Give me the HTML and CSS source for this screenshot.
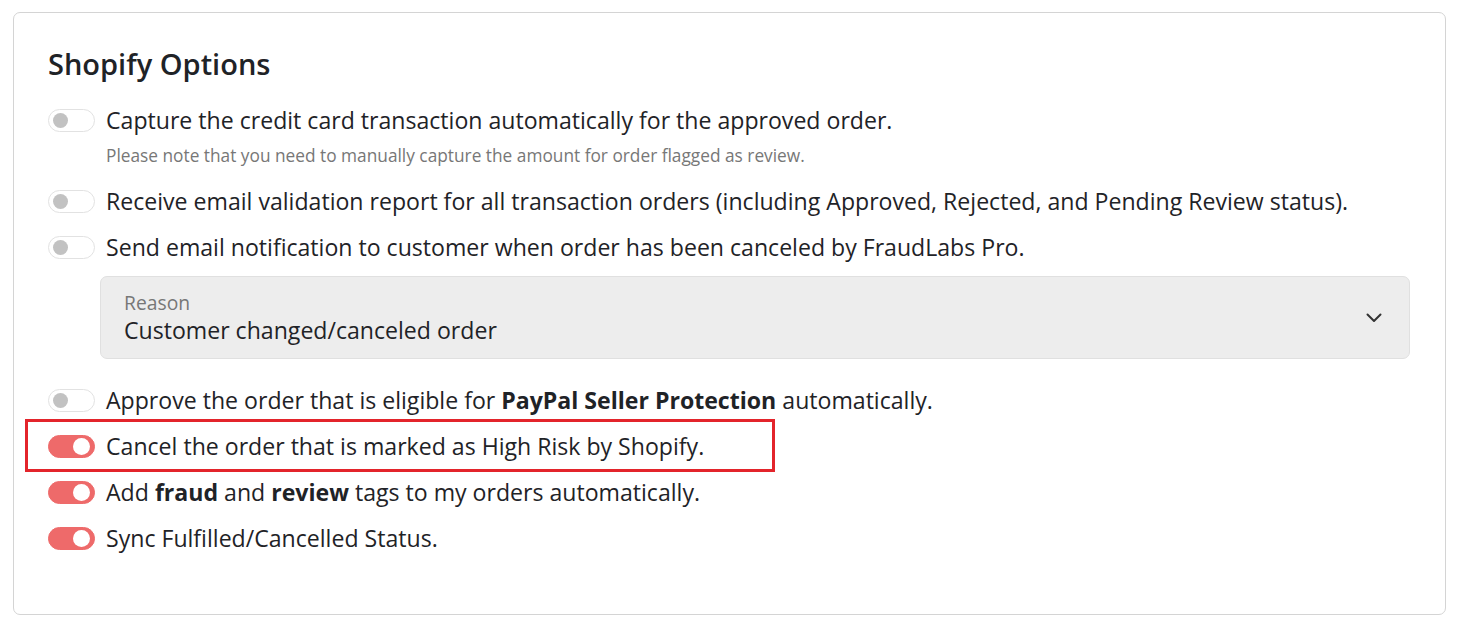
FILE: index.html
```html
<!DOCTYPE html>
<html lang="en">
<head>
<meta charset="utf-8">
<title>Shopify Options</title>
<link rel="stylesheet" href="styles.css">
</head>
<body>
<div class="card">
  <h2 class="title">Shopify Options</h2>
  <div class="options">
    <div class="option">
      <div class="row">
        <span class="toggle"></span>
        <span class="label">Capture the credit card transaction automatically for the approved order.</span>
      </div>
      <div class="note">Please note that you need to manually capture the amount for order flagged as review.</div>
    </div>
    <div class="row">
      <span class="toggle"></span>
      <span class="label">Receive email validation report for all transaction orders (including Approved, Rejected, and Pending Review status).</span>
    </div>
    <div class="option">
      <div class="row">
        <span class="toggle"></span>
        <span class="label">Send email notification to customer when order has been canceled by FraudLabs Pro.</span>
      </div>
      <div class="select">
        <div class="select-text">
          <div class="select-label">Reason</div>
          <div class="select-value">Customer changed/canceled order</div>
        </div>
        <svg class="chevron" width="16" height="10" viewBox="0 0 16 10"><path d="M1.5 1.5 L8 8 L14.5 1.5" fill="none" stroke="#333" stroke-width="2" stroke-linecap="round" stroke-linejoin="round"/></svg>
      </div>
    </div>
    <div class="row">
      <span class="toggle"></span>
      <span class="label">Approve the order that is eligible for <b>PayPal Seller Protection</b> automatically.</span>
    </div>
    <div class="row highlighted">
      <span class="toggle on"></span>
      <span class="label">Cancel the order that is marked as High Risk by Shopify.</span>
      <span class="mark"></span>
    </div>
    <div class="row">
      <span class="toggle on"></span>
      <span class="label">Add <b>fraud</b> and <b>review</b> tags to my orders automatically.</span>
    </div>
    <div class="row">
      <span class="toggle on"></span>
      <span class="label">Sync Fulfilled/Cancelled Status.</span>
    </div>
  </div>
</div>
</body>
</html>
```
FILE: styles.css
```css
* { box-sizing: border-box; }
html, body { margin: 0; padding: 0; background: #fff; }
body {
  font-family: "Open Sans", "Noto Sans", sans-serif;
  color: #1f2327;
  padding: 12px 13px;
}
.card {
  border: 1px solid #d4d4d4;
  border-radius: 7px;
  padding: 33px 35px 60px 34px;
  height: 603px;
}
.title {
  margin: 0 0 23px 0;
  font-size: 29px;
  line-height: 36px;
  font-weight: 600;
  color: #1f2327;
}
.options {
  display: flex;
  flex-direction: column;
  gap: 16px;
}
.row {
  display: flex;
  align-items: center;
  gap: 11px;
  height: 30px;
  position: relative;
}
.label {
  font-size: 23.1px;
  line-height: 30px;
  white-space: nowrap;
}
.label b { font-weight: 700; }
.toggle {
  width: 47px;
  height: 23px;
  border-radius: 12px;
  border: 1px solid #e2e2e2;
  background: #fff;
  position: relative;
  flex: none;
}
.toggle::after {
  content: "";
  position: absolute;
  left: 4px;
  top: 3px;
  width: 15px;
  height: 15px;
  border-radius: 50%;
  background: #c2c2c2;
}
.toggle.on {
  background: #ee6a6a;
  border-color: #ee6a6a;
}
.toggle.on::after {
  left: auto;
  right: 4px;
  top: 2px;
  width: 17px;
  height: 17px;
  background: #fff;
}
.note {
  margin: 10px 0 3px 58px;
  font-size: 17.3px;
  line-height: 22px;
  color: #777;
}
.select {
  margin: 14px 0 10px 52px;
  height: 83px;
  background: #ededed;
  border: 1px solid #e0e0e0;
  border-radius: 7px;
  display: flex;
  align-items: center;
  justify-content: space-between;
  padding: 0 27px 0 23px;
}
.select-label {
  font-size: 19.3px;
  line-height: 24px;
  color: #777;
}
.select-value {
  font-size: 23.1px;
  line-height: 30px;
  color: #1f2327;
}
.chevron { display: block; }
.mark {
  position: absolute;
  left: -23px;
  top: -12px;
  width: 750px;
  height: 53px;
  border: 3px solid #e3242b;
  pointer-events: none;
}
```
